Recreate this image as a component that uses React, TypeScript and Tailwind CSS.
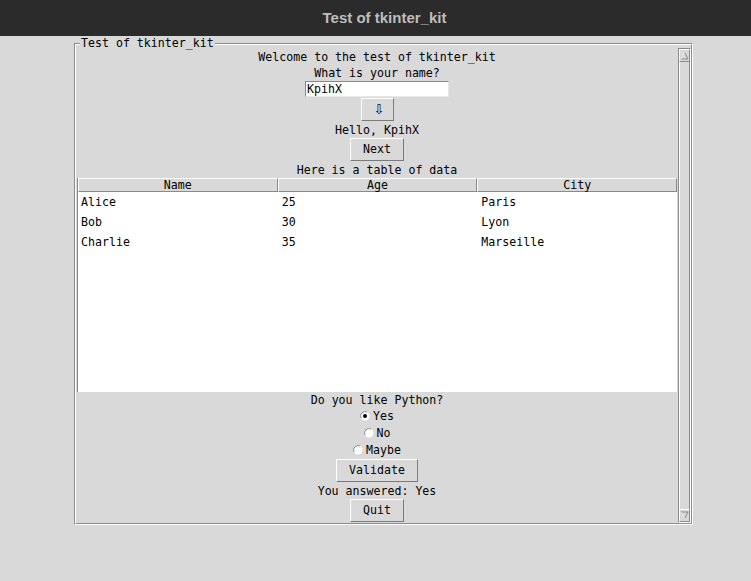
import { useState } from "react";

const rows = [
  { name: "Alice", age: "25", city: "Paris" },
  { name: "Bob", age: "30", city: "Lyon" },
  { name: "Charlie", age: "35", city: "Marseille" },
];

function TkButton({ label, className = "" }: { label: React.ReactNode; className?: string }) {
  return (
    <button
      type="button"
      className={
        "h-[23px] px-[12px] bg-[#d9d9d9] text-black leading-[15px] border border-t-white border-l-white border-b-[#7a7a7a] border-r-[#7a7a7a] " +
        className
      }
    >
      {label}
    </button>
  );
}

function Radio({ checked }: { checked: boolean }) {
  return (
    <svg width="10" height="10" viewBox="0 0 10 10" className="shrink-0">
      <circle cx="5" cy="5" r="4.5" fill="#ffffff" />
      <path d="M1 7 A4.5 4.5 0 0 1 7 1" fill="none" stroke="#8a8a8a" strokeWidth="1" />
      {checked ? <circle cx="5" cy="5" r="2" fill="#000000" /> : null}
    </svg>
  );
}

export default function App() {
  const [answer, setAnswer] = useState("Yes");

  return (
    <div className="w-[751px] h-[581px] bg-[#d9d9d9] text-black font-['DejaVu_Sans_Mono',monospace] text-[11.6px] overflow-hidden">
      {/* title bar */}
      <div className="h-[36px] bg-[#2b2b2b] flex items-center justify-center">
        <span className="font-['Liberation_Sans',sans-serif] font-bold text-[15px] text-[#bdbdbd] pl-[18px]">
          Test of tkinter_kit
        </span>
      </div>

      <div className="pl-[74px] pt-[7px]">
        {/* labelframe, groove border */}
        <div className="relative w-[619px] h-[482px] border border-t-[#8c8c8c] border-l-[#8c8c8c] border-b-white border-r-white">
          <span className="absolute left-[5px] top-[-8px] bg-[#d9d9d9] px-[1px] leading-[14px]">
            Test of tkinter_kit
          </span>
          <div className="h-full border border-t-white border-l-white border-b-[#8c8c8c] border-r-[#8c8c8c] flex">
            {/* main column */}
            <div className="w-[602px] px-[1px] pt-[4px] flex flex-col items-center leading-[16px]">
              <div>Welcome to the test of tkinter_kit</div>
              <div>What is your name?</div>
              <div className="w-[144px] h-[16px] bg-white border border-t-[#8a8a8a] border-l-[#8a8a8a] border-b-[#e8e8e8] border-r-[#e8e8e8] pl-[1px] leading-[14px]">
                KpihX
              </div>
              <TkButton
                label={<span className="font-['DejaVu_Sans',sans-serif] text-[13px] text-black">⇩</span>}
                className="mt-[1px] w-[33px] px-0"
              />
              <div className="mt-[1px]">Hello, KpihX</div>
              <TkButton label="Next" className="mt-[0px]" />
              <div className="mt-[1px]">Here is a table of data</div>

              {/* tree */}
              <div className="w-[600px] h-[214px] bg-white border-l border-[#8a8a8a]">
                <div className="grid grid-cols-3 h-[14px] bg-[#d9d9d9] leading-[12px]">
                  {["Name", "Age", "City"].map((h) => (
                    <div
                      key={h}
                      className="text-center border border-t-white border-l-white border-b-[#8a8a8a] border-r-[#8a8a8a]"
                    >
                      {h}
                    </div>
                  ))}
                </div>
                {rows.map((r) => (
                  <div key={r.name} className="grid grid-cols-3 h-[20px] items-center leading-[20px]">
                    <div className="pl-[3px]">{r.name}</div>
                    <div className="pl-[4px]">{r.age}</div>
                    <div className="pl-[4px]">{r.city}</div>
                  </div>
                ))}
              </div>

              <div>Do you like Python?</div>
              {["Yes", "No", "Maybe"].map((o, i) => (
                <div
                  key={o}
                  className={"flex items-center gap-[3px] h-[17px] cursor-default " + (i === 0 ? "-mt-[1px]" : "")}
                  onClick={() => setAnswer(o)}
                >
                  <Radio checked={answer === o} />
                  <span>{o}</span>
                </div>
              ))}
              <TkButton label="Validate" className="mt-[1px]" />
              <div className="mt-[1px]">You answered: Yes</div>
              <TkButton label="Quit" />
            </div>

            {/* scrollbar */}
            <div className="w-[13px] mt-[3px] flex flex-col border border-t-[#8a8a8a] border-l-[#8a8a8a] border-b-white border-r-white">
              <div className="h-[13px] bg-[#d9d9d9] border border-t-white border-l-white border-b-[#8a8a8a] border-r-[#8a8a8a] flex items-center justify-center">
                <svg width="9" height="9" viewBox="0 0 9 9">
                  <path d="M4.5 1 L8 8 L1 8 Z" fill="#d9d9d9" stroke="#8a8a8a" strokeWidth="1" />
                  <path d="M4.5 1 L1 8" fill="none" stroke="#ffffff" strokeWidth="1" />
                </svg>
              </div>
              <div className="flex-1 bg-[#d9d9d9] border-x border-l-white border-r-[#8a8a8a]" />
              <div className="h-[13px] bg-[#d9d9d9] border border-t-white border-l-white border-b-[#8a8a8a] border-r-[#8a8a8a] flex items-center justify-center">
                <svg width="9" height="9" viewBox="0 0 9 9">
                  <path d="M1 1 L8 1 L4.5 8 Z" fill="#d9d9d9" stroke="#8a8a8a" strokeWidth="1" />
                  <path d="M1 1 L4.5 8" fill="none" stroke="#ffffff" strokeWidth="1" />
                </svg>
              </div>
            </div>
          </div>
        </div>
      </div>
    </div>
  );
}
